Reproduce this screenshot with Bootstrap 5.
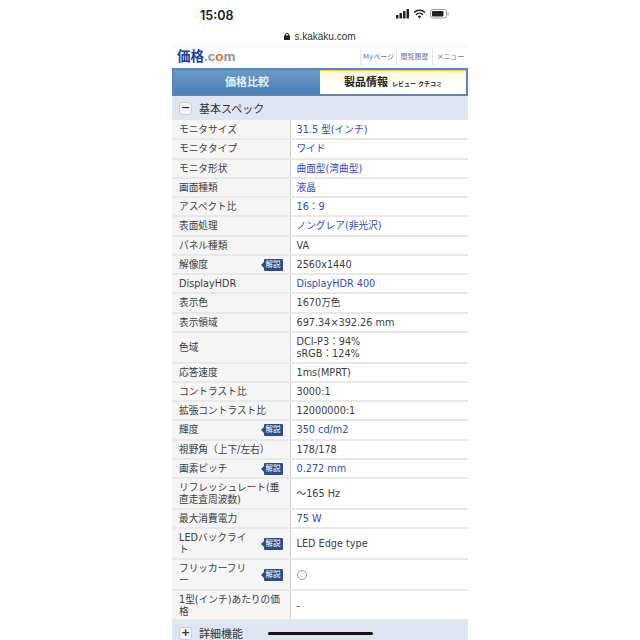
<!DOCTYPE html>
<html lang="ja">
<head>
<meta charset="UTF-8" />
<title>価格.com</title>
<link href="https://cdn.jsdelivr.net/npm/bootstrap@5.3.2/dist/css/bootstrap.min.css" rel="stylesheet" />
<style>
  body { font-family: "DejaVu Sans", "Noto Sans CJK JP", sans-serif; background: #fff; color: #333; }
  .phone { width: 296px; height: 640px; overflow: hidden; }
  .status-bar { height: 29px; padding: 8px 18px 0 28px; color: #1c1c1c; font-family: Inter, "Liberation Sans", sans-serif; font-size: 12.5px; line-height: 15px; font-weight: 600; }
  .url-bar { height: 16px; margin-top: -1px; font-family: "Liberation Sans", sans-serif; font-size: 10px; color: #333; }
  .head-row { height: 22px; margin-top: 2px; border-top: 1px solid #f2f2f2; }
  .logo { font-family: "Liberation Sans", "Noto Sans CJK JP", sans-serif; font-size: 13.5px; font-weight: 700; color: #1a3c9a; padding-left: 5px; }
  .logo i { font-style: normal; color: #8f959c; }
  .logo b { color: #ee6a12; }
  .head-link { width: 36px; font-size: 7px; color: #6a76a8; border-left: 1px solid #e4e4e4; height: 17px; }
  .tabs { height: 28px; background: #5e8dbd; border: 2px solid #5c87b2; }
  .tab-off { width: 146px; padding-top: 2px; background: linear-gradient(#6b9ac8, #4c7fb3); color: #e8f0f7; font-size: 11px; font-weight: 700; }
  .tab-on { flex: 1; padding-top: 2px; background: linear-gradient(#fff7cf, #fff 55%); border-top: 1px solid #f3d24f; font-size: 11px; font-weight: 700; color: #222; }
  .tab-on small { font-size: 6px; margin-left: 4px; }
  .sec-head { height: 24px; background: #dfe6f1; font-size: 11px; color: #333; padding-left: 7px; gap: 7px; flex: none; }
  .sec-head span:last-child { padding-top: 2px; line-height: 1; }
  .sec-btn { width: 13px; height: 13px; background: #f4f4f4; border: 1px solid #ccc; border-radius: 3px; font-size: 11px; font-weight: 700; line-height: 10px; }
  .spec-table { width: 100%; table-layout: fixed; border-collapse: collapse; font-size: 9.7px; line-height: 12px; }
  .spec-table tr { border-bottom: 2px solid #e8e8e8; }
  .spec-table th { width: 118px; height: 19.25px; padding: 1px 7px 0; font-weight: 400; background: #f5f5f5; border-right: 1px solid #cfcfcf; color: #3c3c3c; line-break: anywhere; }
  .spec-table td { padding: 1px 0 0 6px; color: #3c3c3c; }
  .spec-table td.blue { color: #3349b4; }
  .spec-table tr.tall th { height: 30.8px; }
  .spec-table th.has-tip span:first-child { max-width: 70px; }
  .tip { position: relative; flex: none; width: 19px; height: 12px; background: #2f4b86; color: #fff; font-size: 7.5px; line-height: 12px; text-align: center; border-radius: 1px; }
  .tip::before { content: ""; position: absolute; left: -3px; top: 3px; border-style: solid; border-width: 3px 3px 3px 0; border-color: transparent #2f4b86 transparent transparent; }
  .circle-mark { display: block; width: 10px; height: 10px; border: 1px solid #8a98c8; border-radius: 50%; }
  .home-bar { position: absolute; left: 96px; bottom: 5px; width: 105px; height: 3px; background: #111; border-radius: 2px; }
</style>
</head>
<body class="m-0">
<div class="d-flex justify-content-center">
  <div class="phone position-relative">
    <div class="status-bar d-flex justify-content-between align-items-start">
      <span>15:08</span>
      <svg width="54" height="12" viewBox="0 0 54 12" class="mt-0">
        <rect x="0" y="7" width="2.5" height="3.5" rx=".5" fill="#222"/>
        <rect x="3.5" y="5" width="2.5" height="5.5" rx=".5" fill="#222"/>
        <rect x="7" y="3" width="2.5" height="7.5" rx=".5" fill="#222"/>
        <rect x="10.5" y="1" width="2.5" height="9.5" rx=".5" fill="#222"/>
        <path d="M18 4.5a8 8 0 0 1 11 0M20 6.7a5 5 0 0 1 7 0" fill="none" stroke="#222" stroke-width="1.6"/>
        <path d="M21.8 8.4a2.4 2.4 0 0 1 3.4 0l-1.7 2z" fill="#222"/>
        <rect x="34.5" y="1.5" width="16" height="8.5" rx="2.5" fill="none" stroke="#999"/>
        <rect x="36" y="3" width="11.5" height="5.5" rx="1" fill="#222"/>
        <rect x="51.5" y="4.5" width="1" height="3" fill="#999"/>
      </svg>
    </div>
    <div class="url-bar d-flex justify-content-center align-items-center gap-1">
      <svg width="6" height="7" viewBox="0 0 6 7"><rect y="2.5" width="6" height="4.5" rx=".7" fill="#222"/><path d="M1.4 3V2a1.6 1.6 0 0 1 3.2 0v1" fill="none" stroke="#222"/></svg>
      <span>s.kakaku.com</span>
    </div>
    <div class="head-row d-flex align-items-center justify-content-between">
      <span class="logo">価格<i>.c</i><b>o</b><i>m</i></span>
      <div class="d-flex align-items-center">
        <span class="head-link d-flex align-items-center justify-content-center">Myページ</span>
        <span class="head-link d-flex align-items-center justify-content-center">閲覧履歴</span>
        <span class="head-link d-flex align-items-center justify-content-center">メニュー</span>
      </div>
    </div>
    <div class="tabs d-flex">
      <div class="tab-off d-flex align-items-center justify-content-center">価格比較</div>
      <div class="tab-on d-flex align-items-center justify-content-center">製品情報<small>レビュー クチコミ</small></div>
    </div>
    <div class="sec-head d-flex align-items-center">
      <span class="sec-btn d-flex align-items-center justify-content-center">−</span>
      <span>基本スペック</span>
    </div>
    <table class="spec-table">
      <tbody id="specRows"></tbody>
    </table>
    <div class="sec-head d-flex align-items-center">
      <span class="sec-btn d-flex align-items-center justify-content-center">+</span>
      <span>詳細機能</span>
    </div>
    <div class="home-bar"></div>
  </div>
</div>
<script src="https://cdn.jsdelivr.net/npm/bootstrap@5.3.2/dist/js/bootstrap.bundle.min.js"></script>
<script>
  // label, value, value is a link, has the 解説 tag, tall row
  const specs = [
    ["モニタサイズ", "31.5 型(インチ)", true],
    ["モニタタイプ", "ワイド", true],
    ["モニタ形状", "曲面型(湾曲型)", true],
    ["画面種類", "液晶", true],
    ["アスペクト比", "16：9", true],
    ["表面処理", "ノングレア(非光沢)", true],
    ["パネル種類", "VA"],
    ["解像度", "2560x1440", false, true],
    ["DisplayHDR", "DisplayHDR 400", true],
    ["表示色", "1670万色"],
    ["表示領域", "697.34×392.26 mm"],
    ["色域", "DCI-P3：94%<br>sRGB：124%", false, false, true],
    ["応答速度", "1ms(MPRT)"],
    ["コントラスト比", "3000:1"],
    ["拡張コントラスト比", "12000000:1"],
    ["輝度", "350 cd/m2", true, true],
    ["視野角（上下/左右）", "178/178"],
    ["画素ピッチ", "0.272 mm", true, true],
    ["リフレッシュレート(垂直走査周波数)", "～165 Hz", false, false, true],
    ["最大消費電力", "75 W", true],
    ["LEDバックライト", "LED Edge type", false, true, true],
    ["フリッカーフリー", '<span class="circle-mark"></span>', false, true, true],
    ["1型(インチ)あたりの価格", "-", false, false, true],
  ];
  document.getElementById("specRows").innerHTML = specs.map(([label, value, blue, tip, tall]) => `
    <tr class="${tall ? "tall" : ""}">
      <th class="${tip ? "has-tip" : ""}"><div class="d-flex align-items-center justify-content-between"><span>${label}</span>${tip ? '<span class="tip">解説</span>' : ""}</div></th>
      <td class="${blue ? "blue" : ""}">${value}</td>
    </tr>`).join("");
</script>
</body>
</html>
